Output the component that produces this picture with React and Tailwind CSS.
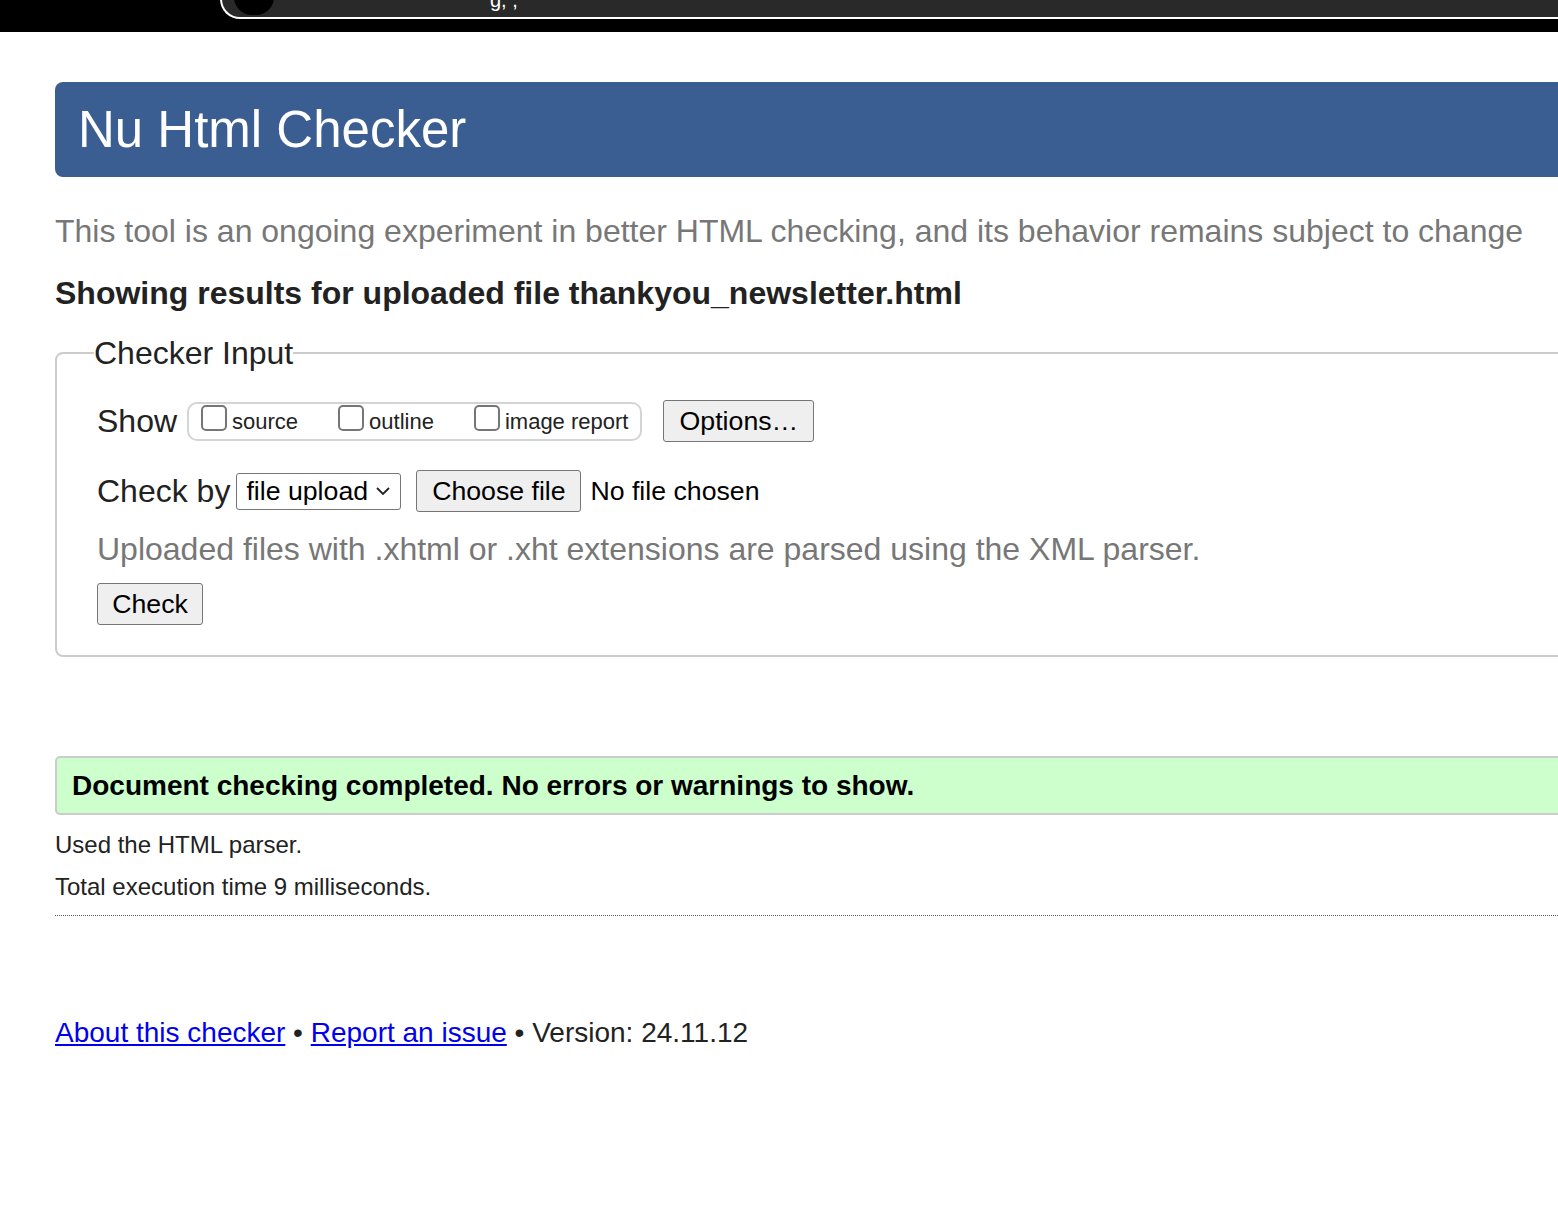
import React from 'react';

const font = { fontFamily: '"Liberation Sans", Arial, sans-serif' };

const TopBar = () => (
  <div className="h-8 bg-black flex overflow-hidden">
    <div className="ml-[220px] flex-1 h-[20px] bg-[#292929] border-b-2 border-l-2 border-white rounded-bl-[36px] -mt-px relative">
      <div className="absolute left-[12px] -top-[20px] w-[40px] h-[36px] rounded-full bg-black"></div>
      <span className="absolute left-[268px] -top-[14px] text-white text-[20px]">g, ,</span>
    </div>
  </div>
);

const Checkbox = ({ label }) => (
  <label className="flex items-center gap-[5px]">
    <span className="w-[26px] h-[26px] rounded-[5px] border-2 border-[#767676] bg-white -mt-[6px]"></span>
    <span className="text-[22px] text-[#222]">{label}</span>
  </label>
);

const Btn = ({ children, className = '' }) => (
  <button className={`bg-[#efefef] border border-[#767676] rounded-[3px] text-[26.7px] text-black leading-none ${className}`}>
    {children}
  </button>
);

export default function App() {
  return (
    <div className="min-h-[1222px] bg-white overflow-hidden" style={font}>
      <TopBar />
      <div className="pl-[55px] w-[1640px]">
        <div className="mt-[50px] h-[95px] bg-[#3b5e92] rounded-l-[8px] flex items-center pl-[23px]">
          <h1 className="text-white text-[51px] leading-none">Nu Html Checker</h1>
        </div>

        <p className="mt-[38px] text-[32px] text-[#777] leading-none">
          This tool is an ongoing experiment in better HTML checking, and its behavior remains subject to change
        </p>

        <p className="mt-[30px] text-[32px] font-bold text-[#222] leading-none">
          Showing results for uploaded file thankyou_newsletter.html
        </p>

        {/* Checker input form */}
        <fieldset className="mt-[20px] border-2 border-[#cccccc] rounded-l-[8px] pl-[40px] pb-[30px] pt-[8px]">
          <legend className="text-[32px] text-[#222] -ml-[3px] px-0">Checker Input</legend>

          <div className="flex items-center mt-[12px]">
            <span className="text-[32px] text-[#222] mr-[10px]">Show</span>
            <div className="flex items-center gap-[40px] border-2 border-[#d4d4d4] rounded-[10px] h-[39px] pl-[12px] pr-[12px]">
              <Checkbox label="source" />
              <Checkbox label="outline" />
              <Checkbox label="image report" />
            </div>
            <Btn className="ml-[21px] w-[151px] h-[42px]">Options…</Btn>
          </div>

          <div className="flex items-center mt-[22px]">
            <span className="text-[32px] text-[#222] mr-[6px]">Check by</span>
            <div className="flex items-center justify-between w-[165px] h-[37px] border border-[#767676] rounded-[3px] px-[9px] text-[26.7px] text-black">
              <span>file upload</span>
              <svg width="16" height="10" viewBox="0 0 16 10" fill="none" stroke="#222" strokeWidth="1.8">
                <path d="M2 2l6 6 6-6" />
              </svg>
            </div>
            <Btn className="ml-[15px] w-[165px] h-[42px]">Choose file</Btn>
            <span className="ml-[9px] text-[26.7px] text-black">No file chosen</span>
          </div>

          <p className="mt-[18px] text-[32px] text-[#777] leading-none">
            Uploaded files with .xhtml or .xht extensions are parsed using the XML parser.
          </p>

          <Btn className="mt-[18px] w-[106px] h-[42px]">Check</Btn>
        </fieldset>

        {/* Result */}
        <div className="mt-[99px] h-[59px] bg-[#ccffcc] border-2 border-[#cccccc] rounded-l-[5px] flex items-center pl-[15px]">
          <p className="text-[28px] font-bold text-black leading-none">Document checking completed. No errors or warnings to show.</p>
        </div>

        <p className="mt-[18px] text-[24px] text-[#222] leading-none">Used the HTML parser.</p>
        <p className="mt-[18px] text-[24px] text-[#222] leading-none">Total execution time 9 milliseconds.</p>
        <div className="mt-[16px] border-b border-dotted border-[#555]"></div>

        <p className="mt-[103px] text-[28px] text-[#222] leading-none">
          <a href="#" className="text-[#0000ee] underline">About this checker</a>
          {' • '}
          <a href="#" className="text-[#0000ee] underline">Report an issue</a>
          {' • Version: 24.11.12'}
        </p>
      </div>
    </div>
  );
}
